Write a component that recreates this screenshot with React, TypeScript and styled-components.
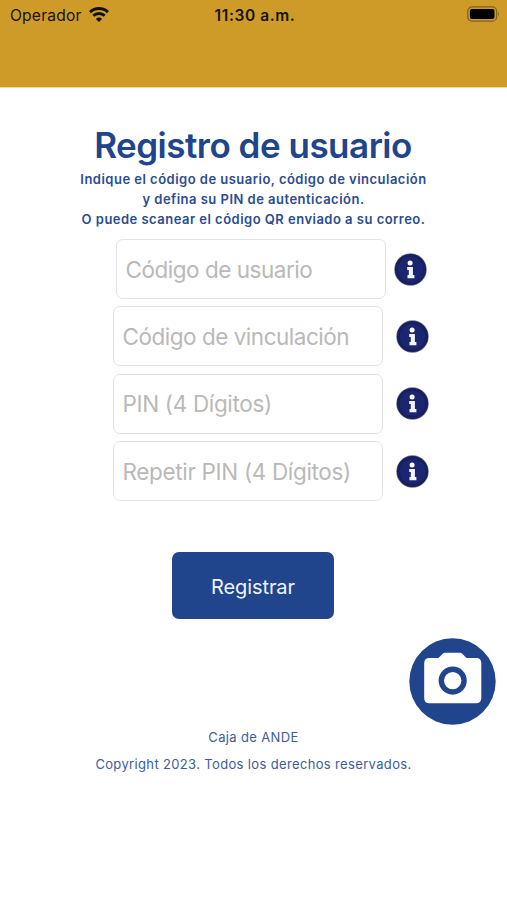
import React from "react";
import styled, { createGlobalStyle } from "styled-components";

const GlobalStyle = createGlobalStyle`
  * { box-sizing: border-box; }
  body { margin: 0; background: #fff; font-family: Inter, sans-serif; }
`;

const Screen = styled.div`
  position: relative;
  width: 507px;
  height: 900px;
  display: flex;
  flex-direction: column;
  align-items: center;
  overflow: hidden;
  background: #fff;
  color: #20458c;
`;

const Header = styled.header`
  width: 100%;
  height: 88px;
  flex: none;
  background: #ce9b29;
  border-bottom: 1px solid #ecd9ae;
`;

const StatusBar = styled.div`
  height: 30px;
  padding: 0 7px 0 10px;
  display: grid;
  grid-template-columns: 1fr auto 1fr;
  align-items: center;
  color: #17120a;
  line-height: 20px;
`;

const Carrier = styled.div`
  display: flex;
  align-items: center;
  gap: 7px;
  padding-top: 1px;
  font-size: 15.6px;
  letter-spacing: 0.2px;
  svg { margin-bottom: 2px; }
`;

const Clock = styled.div`
  padding-top: 1px;
  font-size: 15.5px;
  font-weight: 600;
  letter-spacing: 0.6px;
`;

const BatterySlot = styled.div`
  display: flex;
  justify-content: flex-end;
  padding-bottom: 2px;
`;

const Title = styled.h1`
  margin: 35px 1px 0 0;
  font-size: 35px;
  line-height: 44px;
  font-weight: 600;
  letter-spacing: -0.5px;
  white-space: nowrap;
`;

const Intro = styled.div`
  display: flex;
  flex-direction: column;
  align-items: center;
  margin-top: 2px;
`;

const IntroLine = styled.span`
  font-size: 13px;
  line-height: 20.2px;
  font-weight: 600;
  letter-spacing: 0.48px;
  color: #2b4c92;
  white-space: nowrap;
`;

const Form = styled.form`
  display: flex;
  flex-direction: column;
  gap: 7.4px;
  width: 316px;
  margin: 9.4px 0 0 34px;
`;

const FieldRow = styled.div<{ $tight?: boolean }>`
  display: flex;
  align-items: center;
  justify-content: center;
  padding-left: ${(p) => (p.$tight ? 1 : 0)}px;
  gap: ${(p) => (p.$tight ? 8 : 13)}px;
`;

const Input = styled.input<{ $spacing: number }>`
  width: 270px;
  height: 60px;
  padding: 0 9px;
  border: 1.5px solid #e3e3e3;
  border-radius: 7px;
  outline: none;
  background: #fff;
  font: 400 22.5px Inter, sans-serif;
  letter-spacing: ${(p) => p.$spacing}px;
  &::placeholder { color: #b9b9b9; opacity: 1; }
`;

const Submit = styled.button`
  width: 162px;
  height: 67px;
  margin: 51px 1px 0 0;
  padding: 2px 0 0;
  border: 0;
  border-radius: 7px;
  background: #20458c;
  color: #eef3ff;
  font: 400 20px Inter, sans-serif;
  letter-spacing: -0.1px;
`;

const Footer = styled.footer`
  display: flex;
  flex-direction: column;
  align-items: center;
  margin-top: 105px;
  font-size: 13px;
  line-height: 27px;
  letter-spacing: 0.35px;
  color: #3e5c9b;
  white-space: nowrap;
`;

const ScanButton = styled.button`
  position: absolute;
  right: 11px;
  top: 638px;
  width: 87px;
  height: 87px;
  padding: 0;
  border: 0;
  background: none;
  svg { display: block; }
`;

const WifiIcon = () => (
  <svg width="20" height="15" viewBox="0 0 20 15" fill="none" stroke="#111" strokeWidth="2.9">
    <path d="M1 5.1a13 13 0 0 1 18 0" />
    <path d="M4.3 8.8a8.3 8.3 0 0 1 11.4 0" />
    <path d="M10 14.9 6.9 11.9a4.4 4.4 0 0 1 6.2 0z" fill="#111" stroke="none" />
  </svg>
);

const BatteryIcon = () => (
  <svg width="33" height="16" viewBox="0 0 33 16">
    <rect x="0.8" y="0.8" width="28.8" height="14.4" rx="4.3" fill="none" stroke="#80611f" strokeWidth="1.2" />
    <rect x="2.9" y="2.9" width="24.6" height="10.2" rx="2" fill="#000" />
    <path d="M31 5.6q1.8 2.4 0 4.8z" fill="#80611f" />
  </svg>
);

const InfoIcon = () => (
  <svg width="33" height="33" viewBox="0 0 33 33">
    <circle cx="16.5" cy="16.5" r="16.2" fill="#6c7191" />
    <circle cx="16.5" cy="16.5" r="15.6" fill="#171f5c" />
    <circle cx="16.5" cy="16.5" r="12.8" fill="#1b2670" />
    <circle cx="16.1" cy="10" r="2.5" fill="#fff" />
    <path d="M13.2 13.9h5.7v8.2h1.5v3.2h-6.9v-3.2h1.3v-5.1h-1.6z" fill="#f4f6ff" />
  </svg>
);

const CameraIcon = () => (
  <svg width="87" height="87" viewBox="0 0 87 87">
    <circle cx="43.5" cy="43.5" r="43.2" fill="#20458c" />
    <path d="M20.5 20h9l4.2-4.2q1-1 2.3-1h15q1.3 0 2.3 1l4.2 4.2H67q5.3 0 5.3 5.3V60q0 5.3-5.3 5.3H20.5q-5.3 0-5.3-5.3V25.3Q15.2 20 20.5 20z" fill="#fff" />
    <circle cx="43.7" cy="42.6" r="11.4" fill="#fff" stroke="#20458c" strokeWidth="5.4" />
  </svg>
);

const intro = [
  "Indique el código de usuario, código de vinculación",
  "y defina su PIN de autenticación.",
  "O puede scanear el código QR enviado a su correo.",
];

const fields = [
  { label: "Código de usuario", spacing: -0.48 },
  { label: "Código de vinculación", spacing: -0.48 },
  { label: "PIN (4 Dígitos)", spacing: -0.34 },
  { label: "Repetir PIN (4 Dígitos)", spacing: -0.34 },
];

export default function App() {
  return (
    <Screen>
      <GlobalStyle />
      <Header>
        <StatusBar>
          <Carrier>Operador <WifiIcon /></Carrier>
          <Clock>11:30 a.m.</Clock>
          <BatterySlot><BatteryIcon /></BatterySlot>
        </StatusBar>
      </Header>
      <Title>Registro de usuario</Title>
      <Intro>
        {intro.map((line) => (
          <IntroLine key={line}>{line}</IntroLine>
        ))}
      </Intro>
      <Form>
        {fields.map((field, i) => (
          <FieldRow key={field.label} $tight={i === 0}>
            <Input placeholder={field.label} $spacing={field.spacing} />
            <InfoIcon />
          </FieldRow>
        ))}
      </Form>
      <Submit>Registrar</Submit>
      <Footer>
        <span>Caja de ANDE</span>
        <span>Copyright 2023. Todos los derechos reservados.</span>
      </Footer>
      <ScanButton aria-label="Escanear código QR"><CameraIcon /></ScanButton>
    </Screen>
  );
}
